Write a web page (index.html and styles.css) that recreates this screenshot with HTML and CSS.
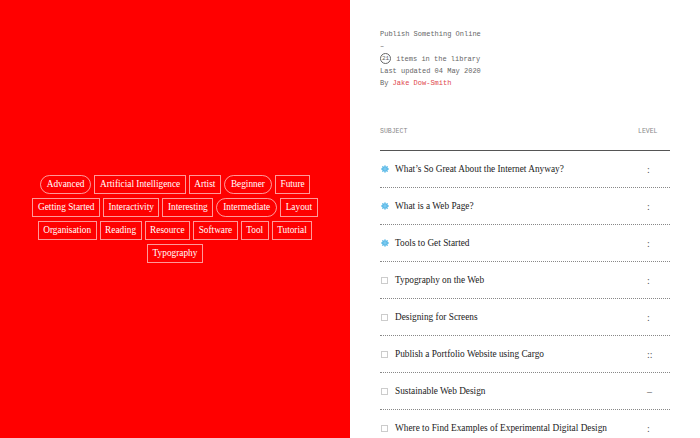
FILE: index.html
```html
<!DOCTYPE html>
<html lang="en">
<head>
  <meta charset="UTF-8">
  <title>Publish Something Online</title>
  <link rel="stylesheet" href="styles.css">
</head>
<body>
  <div class="page">
    <!-- tag cloud -->
    <div class="side">
      <div class="tags">
        <span class="tag round">Advanced</span>
        <span class="tag">Artificial Intelligence</span>
        <span class="tag">Artist</span>
        <span class="tag round">Beginner</span>
        <span class="tag">Future</span>
        <span class="tag">Getting Started</span>
        <span class="tag">Interactivity</span>
        <span class="tag">Interesting</span>
        <span class="tag round">Intermediate</span>
        <span class="tag">Layout</span>
        <span class="tag">Organisation</span>
        <span class="tag">Reading</span>
        <span class="tag">Resource</span>
        <span class="tag">Software</span>
        <span class="tag">Tool</span>
        <span class="tag">Tutorial</span>
        <span class="tag">Typography</span>
      </div>
    </div>

    <div class="main">
      <div class="info">
        <p>Publish Something Online</p>
        <p>–</p>
        <p><span class="count">21</span> items in the library</p>
        <p>Last updated 04 May 2020</p>
        <p>By <a href="#">Jake Dow-Smith</a></p>
      </div>

      <div class="list">
        <div class="list-head">
          <span>SUBJECT</span>
          <span class="lvl">LEVEL</span>
        </div>
        <div class="row">
          <svg class="ico star" viewBox="0 0 10 10"><path d="M5 0.5V9.5M0.5 5H9.5M1.8 1.8L8.2 8.2M8.2 1.8L1.8 8.2"/><rect x="2.8" y="2.8" width="4.4" height="4.4"/></svg>
          <span class="title">What’s So Great About the Internet Anyway?</span><span class="lvl">:</span>
        </div>
        <div class="row">
          <svg class="ico star" viewBox="0 0 10 10"><path d="M5 0.5V9.5M0.5 5H9.5M1.8 1.8L8.2 8.2M8.2 1.8L1.8 8.2"/><rect x="2.8" y="2.8" width="4.4" height="4.4"/></svg>
          <span class="title">What is a Web Page?</span><span class="lvl">:</span>
        </div>
        <div class="row">
          <svg class="ico star" viewBox="0 0 10 10"><path d="M5 0.5V9.5M0.5 5H9.5M1.8 1.8L8.2 8.2M8.2 1.8L1.8 8.2"/><rect x="2.8" y="2.8" width="4.4" height="4.4"/></svg>
          <span class="title">Tools to Get Started</span><span class="lvl">:</span>
        </div>
        <div class="row"><span class="ico box"></span><span class="title">Typography on the Web</span><span class="lvl">:</span></div>
        <div class="row"><span class="ico box"></span><span class="title">Designing for Screens</span><span class="lvl">:</span></div>
        <div class="row"><span class="ico box"></span><span class="title">Publish a Portfolio Website using Cargo</span><span class="lvl">::</span></div>
        <div class="row"><span class="ico box"></span><span class="title">Sustainable Web Design</span><span class="lvl">–</span></div>
        <div class="row"><span class="ico box"></span><span class="title">Where to Find Examples of Experimental Digital Design</span><span class="lvl">:</span></div>
      </div>
    </div>
  </div>
</body>
</html>
```

FILE: styles.css
```css
html, body { margin: 0; height: 100%; overflow: hidden; }
body { font-family: "Liberation Serif", serif; background: #fff; }

.page { display: flex; height: 100%; }

.side {
  width: 350px;
  background: #ff0000;
  display: flex;
  align-items: center;
  justify-content: center;
}

.tags {
  width: 300px;
  display: flex;
  flex-wrap: wrap;
  justify-content: center;
  gap: 4px 3px;
}

.tag {
  color: #fff;
  font-size: 9.3px;
  line-height: 17px;
  padding: 0 4.5px;
  border: 1px solid rgba(255, 255, 255, 0.6);
}
.tag.round { border-radius: 10px; padding: 0 6px; }

.main { flex: 1; padding: 28px 30px 0 30px; }

.info p {
  margin: 0;
  font-family: "Liberation Mono", monospace;
  font-size: 7px;
  line-height: 12.3px;
  color: #666;
}
.info a { color: #e0474c; text-decoration: none; }

.count {
  display: inline-block;
  width: 9px;
  height: 9px;
  border: 1px solid #666;
  border-radius: 50%;
  font-size: 6px;
  line-height: 9px;
  text-align: center;
  vertical-align: middle;
  margin-right: 1px;
}

.list { margin-top: 39px; }

.list-head {
  display: flex;
  justify-content: space-between;
  font-family: "Liberation Mono", monospace;
  font-size: 6.5px;
  color: #888;
  padding-bottom: 15px;
  border-bottom: 1px solid #555;
}
.list-head .lvl { width: 32px; }

.row {
  display: flex;
  align-items: center;
  height: 36px;
  border-bottom: 1px dotted #888;
  font-size: 9.3px;
  color: #222;
}

.ico { flex: none; }
.star {
  width: 8px;
  height: 8px;
  margin: 0 6px 0 1px;
  stroke: #2ea6e0;
  stroke-width: 1.6;
  fill: #7cc8ee;
}
.star rect { stroke: none; }
.box {
  width: 5px;
  height: 5px;
  border: 1px solid #ccc;
  margin: 0 7px 0 1px;
}

.title { flex: 1; }
.row .lvl { width: 32px; font-size: 10px; color: #555; padding-left: 9px; box-sizing: border-box; }
```
